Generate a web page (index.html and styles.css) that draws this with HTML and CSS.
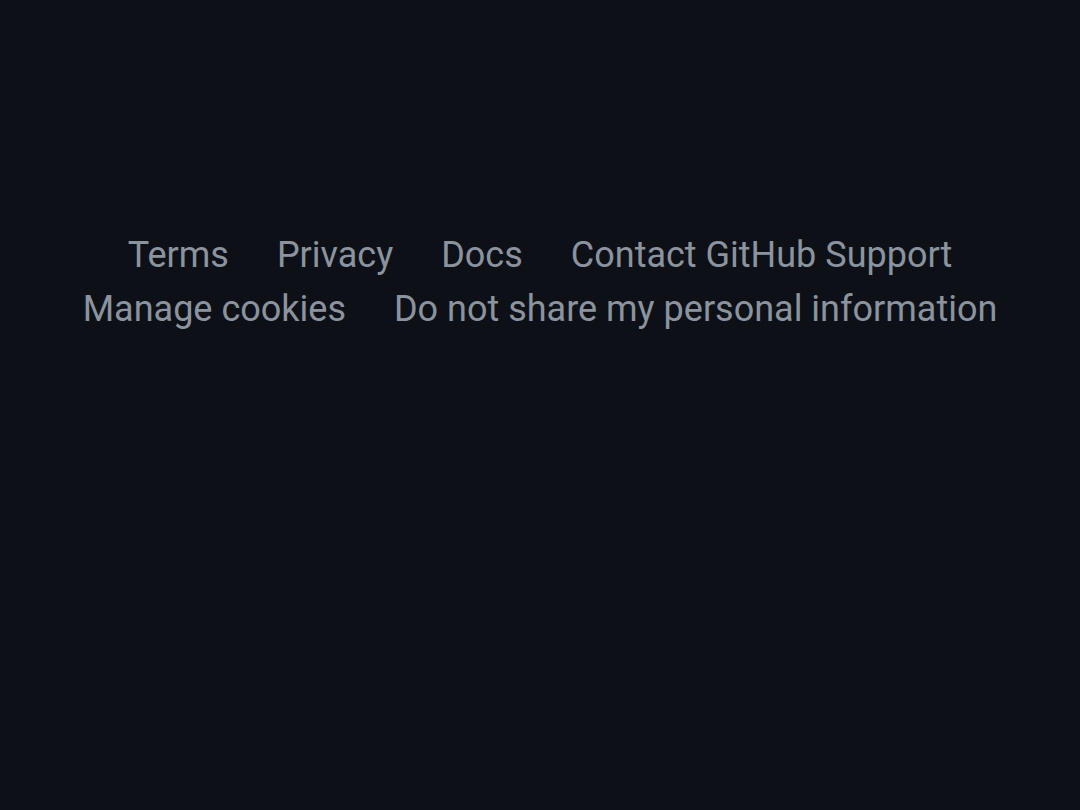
FILE: index.html
```html
<!DOCTYPE html>
<html lang="en">
<head>
<meta charset="utf-8">
<title>Footer</title>
<link rel="stylesheet" href="styles.css">
</head>
<body>
<footer class="footer">
  <ul class="links">
    <li><a href="#">Terms</a></li>
    <li><a href="#">Privacy</a></li>
    <li><a href="#">Docs</a></li>
    <li><a href="#">Contact GitHub Support</a></li>
    <li><a href="#">Manage cookies</a></li>
    <li><a href="#">Do not share my personal information</a></li>
  </ul>
</footer>
</body>
</html>
```
FILE: styles.css
```css
html, body {
  margin: 0;
  padding: 0;
  background: #0d1117;
  height: 100%;
}
body {
  font-family: Roboto, "Liberation Sans", sans-serif;
}
.footer {
  padding-top: 228px;
  display: flex;
  justify-content: center;
}
.links {
  list-style: none;
  margin: 0;
  padding: 0 40px;
  display: flex;
  flex-wrap: wrap;
  justify-content: center;
  column-gap: 48px;
  max-width: 1000px;
}
.links li {
  font-size: 36px;
  line-height: 54px;
}
.links a {
  color: #8b949e;
  text-decoration: none;
}
```
